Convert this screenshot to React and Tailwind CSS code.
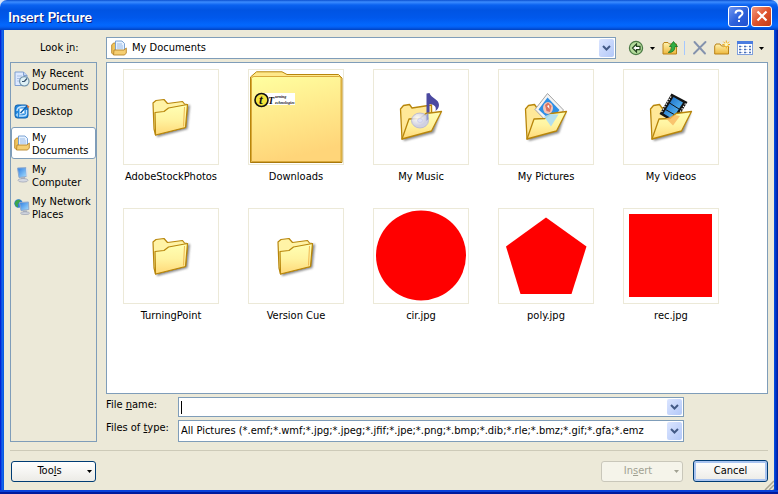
import React from "react";

const GOLD = "#b8860b";

function Gradients() {
  return (
    <svg width="0" height="0" className="absolute" aria-hidden="true">
      <defs>
        <linearGradient id="folder" x1="0" y1="0" x2="0" y2="1">
          <stop offset="0" stopColor="#ffffb4" />
          <stop offset="0.5" stopColor="#fff3a0" />
          <stop offset="1" stopColor="#ffd877" />
        </linearGradient>
        <linearGradient id="bigFolder" x1="0" y1="0" x2="0.25" y2="1">
          <stop offset="0" stopColor="#ffffa0" />
          <stop offset="0.5" stopColor="#ffea8c" />
          <stop offset="1" stopColor="#ffd579" />
        </linearGradient>
        <linearGradient id="smallFolder" x1="0" y1="0" x2="0" y2="1">
          <stop offset="0" stopColor="#fff3b0" />
          <stop offset="1" stopColor="#edb73c" />
        </linearGradient>
        <linearGradient id="blueScreen" x1="0" y1="0" x2="1" y2="1">
          <stop offset="0" stopColor="#2b7be0" />
          <stop offset="1" stopColor="#a9e0ff" />
        </linearGradient>
        <linearGradient id="film" x1="0" y1="0" x2="1" y2="1">
          <stop offset="0" stopColor="#0c5fc0" />
          <stop offset="1" stopColor="#6fd0ff" />
        </linearGradient>
        <radialGradient id="disc" cx="0.35" cy="0.35">
          <stop offset="0" stopColor="#ffffff" />
          <stop offset="1" stopColor="#c8cbee" />
        </radialGradient>
        <filter id="soft" x="-20%" y="-20%" width="150%" height="150%">
          <feGaussianBlur stdDeviation="1" />
        </filter>
      </defs>
    </svg>
  );
}

function Art({ children }) {
  return (
    <svg viewBox="1 1 94 94" className="block size-full" aria-hidden="true">
      {children}
    </svg>
  );
}

function ClosedFolder() {
  return (
    <Art>
      <path d="M33 45 L67 36 L64.500 60 L34 68Z" fill="#555" opacity=".7" filter="url(#soft)" />
      <path d="M30 34 L33 31.500 L41 30.500 L44.500 34.500 L59.500 32.500 L61.500 35 L64.500 35.500 L62.500 58.500 L32.500 66 L31 60Z" fill="#fff3a6" stroke={GOLD} strokeWidth="1.200" strokeLinejoin="round" />
      <path d="M32 43.500 L41 42.500 L45.500 39 L64.500 35.500 L62.500 58.500 L32.500 66Z" fill="url(#folder)" stroke={GOLD} strokeWidth="1.200" strokeLinejoin="round" />
      <path d="M61.500 38 L60.500 57.500" stroke="#f0b850" strokeWidth="1" />
    </Art>
  );
}

function OpenFolder({ children, overlay }) {
  return (
    <Art>
      <path d="M30 69 L68 43 L61 64 L31 72Z" fill="#444" opacity=".6" filter="url(#soft)" />
      <path d="M27.500 40 L30.500 36.500 L36.500 35.500 L39 39 L58.500 36 L59 60 L29 70Z" fill="#ffe898" stroke={GOLD} strokeWidth="1.300" strokeLinejoin="round" />
      {children}
      <path d="M29 70 L36 50 L47 49.500 L53 44.500 L68.500 42.500 L58.500 62Z" fill="url(#folder)" stroke={GOLD} strokeWidth="1.300" strokeLinejoin="round" />
      {overlay}
    </Art>
  );
}

function MusicFolder() {
  return (
    <OpenFolder
      overlay={
        <g>
          <ellipse cx="47" cy="51.500" rx="8.500" ry="7.500" fill="url(#disc)" stroke="#a3a8da" strokeWidth=".8" opacity=".85" />
          <ellipse cx="47" cy="51.500" rx="2.500" ry="2" fill="#dfe1f6" stroke="#b9bde4" strokeWidth=".5" />
          <path d="M53.500 45 L55.500 44 L55.500 50 L53.500 52Z" fill="#9298cf" />
        </g>
      }
    >
      <path d="M53.500 24.500 L56.500 24 C58 29 66 30 66 36 C66 39 64 41 62.500 42 C64 37 60 35 56.500 35 L56.500 48 L53.500 50Z" fill="#4b49a0" />
    </OpenFolder>
  );
}

function PictureFolder() {
  return (
    <OpenFolder overlay={<path d="M46 47.500 L52 45 L60.500 45.500 L53 57.500Z" fill="#a9dcf5" opacity=".9" />}>
      <path d="M49.500 24.500 L65.500 41 L53 57 L37 40.500Z" fill="#f4f4f4" stroke="#a4a4a4" strokeWidth="1" />
      <path d="M49.500 28.500 L61.500 41 L53 52 L40.500 40.500Z" fill="#2e8fe6" />
      <ellipse cx="50" cy="39" rx="5" ry="6" fill="#f4c6b6" />
      <path d="M47 36 L50 33.500 L53.500 37 L52 43 L48.500 42Z" fill="#dc735f" />
      <path d="M49 37 L51 36 L51.500 40Z" fill="#fff" />
    </OpenFolder>
  );
}

function VideoFolder() {
  return (
    <OpenFolder overlay={<path d="M43 49.500 L52 46 L57 47 L50 56.500Z" fill="#f7b35c" opacity=".75" />}>
      <path d="M48.500 24.500 L64.500 33 L51.500 54 L36.500 45Z" fill="#151515" />
      <path d="M50.500 28 L60 33.500 L49.500 50 L40.500 44.500Z" fill="url(#film)" />
      <path d="M46.500 34 L56 40 M42.500 40.500 L52 46" stroke="#111" strokeWidth="1" />
      <path d="M48 27.500 L38 44 M62.500 34.500 L52 51" stroke="#fff" strokeWidth="1.200" strokeDasharray="1.300 1.500" />
    </OpenFolder>
  );
}

function DownloadsFolder() {
  return (
    <Art>
      <path d="M2.500 93.500 V8 L8.500 2.800 H34 L39 5.500 H90.500 L94 9 V93.500Z" fill="#ffe88a" stroke={GOLD} />
      <path d="M3.500 92.500 V9.500 Q3.500 7.500 6 7.500 H91 Q93 7.500 93 9.500 V92.500Z" fill="url(#bigFolder)" stroke="#d9a93a" />
      <path d="M2.500 93.500 H94" stroke="#a8780c" />
      <rect x="16" y="24" width="31" height="12" fill="#fff" />
      <circle cx="13.500" cy="31" r="6.500" fill="#f4e53c" stroke="#111" strokeWidth="1.600" />
      <g fill="#111" fontStyle="italic" fontWeight="700" fontFamily="Liberation Serif, serif">
        <text x="11" y="35" fontSize="13">t</text>
        <text x="20" y="35" fontSize="10">T</text>
        <text x="27" y="29" fontSize="4">urning</text>
        <text x="27" y="35" fontSize="4">echnologies</text>
      </g>
    </Art>
  );
}

function Circle() {
  return (
    <Art>
      <circle cx="48" cy="47.500" r="45" fill="#f00" />
    </Art>
  );
}

function Pentagon() {
  return (
    <Art>
      <polygon points="48,9.500 88.500,38.500 73.500,86 22.500,86 8,38.500" fill="#f00" />
    </Art>
  );
}

function Square() {
  return (
    <Art>
      <rect x="6" y="6" width="83" height="83" fill="#f00" />
    </Art>
  );
}

function Icon({ children }) {
  return (
    <svg viewBox="0 0 16 16" className="block size-4 shrink-0" aria-hidden="true">
      {children}
    </svg>
  );
}

function RecentIcon() {
  return (
    <Icon>
      <path d="M1 1 H9.500 L13 4.500 V14.500 H1Z" fill="#dce9ff" stroke="#7f9fd0" />
      <path d="M9.500 1 V4.500 H13" fill="#c0d4f4" stroke="#7f9fd0" />
      <path d="M3 5 H8 M3 7.500 H6 M3 10 H5" stroke="#a9bfe4" />
      <circle cx="10.300" cy="10.300" r="4.700" fill="#dff1f6" stroke="#6f91a8" strokeWidth="1.200" />
      <path d="M10.300 10.500 L13 7.500 M10.300 10.500 H8" stroke="#35506b" strokeWidth="1.200" />
    </Icon>
  );
}

function DesktopIcon() {
  return (
    <Icon>
      <rect x="1" y="2" width="13" height="13" rx="2.500" fill="#2287dc" stroke="#0c5fae" />
      <path d="M3 8 Q3 4 8 3.500 L12 3.500 M12.500 7 V11 Q12 13 9 13 H5" fill="none" stroke="#bfe2ff" strokeWidth="1.400" />
      <path d="M5.500 5.500 L10.500 5 V10.500 L5.500 11.500Z" fill="#fff" stroke="#7fbdf0" />
      <path d="M6.500 10 L13.500 2.500" stroke="#0c5fae" strokeWidth="1.500" />
      <path d="M12.500 1.500 L15.500 3.500 L14 5.500Z" fill="#e87c3a" />
      <path d="M1.500 12 L4 9.500 V14Z" fill="#9bd1fa" />
    </Icon>
  );
}

function DocumentsIcon() {
  return (
    <Icon>
      <path d="M.7 5 L2.500 3 H5 V14 L2 14.500 L.7 13Z" fill="#f0c45c" stroke="#b8862a" strokeWidth=".9" />
      <path d="M4.500 1 H11 L13.500 3.500 V11 H4.500Z" fill="#e6f1ff" stroke="#6f9bd0" strokeWidth=".9" />
      <path d="M6 4 H11 M6 6 H12 M6 8 H12" stroke="#9cbce6" />
      <path d="M3 10 H13 L15.300 8 V13 L13.500 15 H2.500Z" fill="#f5ce72" stroke="#b8862a" strokeWidth=".9" />
    </Icon>
  );
}

function ComputerIcon() {
  return (
    <Icon>
      <path d="M3.500 1 L12 .7 L12.500 9.500 L5 10.500Z" fill="url(#blueScreen)" stroke="#8fa9cc" />
      <path d="M12 .7 L13.700 2 V10 L12.500 9.800Z" fill="#dfe4ec" />
      <path d="M7 10.500 L11 10 V12.500 H7Z" fill="#a7aebb" />
      <ellipse cx="9" cy="13.300" rx="5" ry="1.800" fill="#d5d9e2" stroke="#9aa1b2" strokeWidth=".7" />
    </Icon>
  );
}

function NetworkIcon() {
  return (
    <Icon>
      <circle cx="4.500" cy="4.500" r="4.200" fill="#2d7cd8" />
      <path d="M1 3 Q3 0 6.500 1 Q6 4 3.500 5 Q5 7 3.500 8.400 Q1 7 .7 4.500Z" fill="#3da548" />
      <path d="M5.500 3.500 L14.500 3 L14.800 10.500 L7 11.500Z" fill="url(#blueScreen)" stroke="#8fa9cc" />
      <path d="M9 11.500 H13 V13.500 H9Z" fill="#a7aebb" />
      <ellipse cx="11" cy="14.200" rx="4.500" ry="1.400" fill="#cfd4de" stroke="#9aa1b2" strokeWidth=".7" />
    </Icon>
  );
}

function BackIcon() {
  return (
    <Icon>
      <circle cx="8" cy="8" r="6.600" fill="#b5dc9c" stroke="#4b7a45" strokeWidth="1.200" />
      <path d="M8.500 4 L4.500 8 L8.500 12 V9.700 H12 V6.300 H8.500Z" fill="#fff" stroke="#24451f" strokeWidth="1.200" />
    </Icon>
  );
}

function UpFolderIcon() {
  return (
    <Icon>
      <path d="M1 4 L2 2.500 H6 L7.500 4 H14.500 V14 H1Z" fill="url(#smallFolder)" stroke="#b98218" />
      <path d="M6.500 12 Q9.500 11 9.500 6.500 H7.500 L11.500 1.500 L15.500 6.500 H13 Q13 12.500 6.500 12.500Z" fill="#2fae42" stroke="#187026" strokeWidth=".8" />
    </Icon>
  );
}

function DeleteIcon() {
  return (
    <Icon>
      <path d="M2.500 2 L13 13.500 M13.500 2 L2 13.500" stroke="#8492ad" strokeWidth="1.900" strokeLinecap="round" />
    </Icon>
  );
}

function NewFolderIcon() {
  return (
    <Icon>
      <path d="M.7 6 L2 4 H6 L7.500 6 H14.500 V14 H.7Z" fill="url(#smallFolder)" stroke="#b98218" />
      <path d="M12.300 .5 V8.500 M8.300 4.500 H16 M9.500 1.700 L15 7.300 M15 1.700 L9.500 7.300" stroke="#f2b01e" strokeWidth="1" />
      <circle cx="12.300" cy="4.500" r="1.700" fill="#fff7b8" />
    </Icon>
  );
}

function ViewsIcon() {
  return (
    <Icon>
      <rect x=".5" y="1.500" width="15" height="13" fill="#fff" stroke="#7f9fdc" />
      <rect x="0" y="1" width="16" height="3" fill="#4a7ce0" />
      <path d="M2 6.500 H4 M7 6.500 H9 M12 6.500 H14 M2 9.500 H4 M7 9.500 H9 M12 9.500 H14 M2 12.500 H4 M7 12.500 H9 M12 12.500 H14" stroke="#4a6fb8" strokeWidth="1.500" />
      <path d="M4 6.500 H5.500 M9 6.500 H10.500 M4 9.500 H5.500 M9 9.500 H10.500 M4 12.500 H5.500 M9 12.500 H10.500" stroke="#a9bde6" strokeWidth="1" />
    </Icon>
  );
}

function Triangle({ className = "text-black" }) {
  return (
    <svg viewBox="0 0 5 3" className={`${className} block h-[3px] w-[5px] shrink-0`} aria-hidden="true">
      <path d="M0 0 H5 L2.500 3Z" fill="currentColor" />
    </svg>
  );
}

function Chevron() {
  return (
    <span className="pointer-events-none flex w-[15px] shrink-0 items-center justify-center self-stretch rounded-xs bg-linear-to-br from-[#dbe5ff] to-[#b3c8f8]">
      <svg viewBox="0 0 9 6" className="h-[6px] w-[9px]" aria-hidden="true">
        <path d="M1 1 L4.500 4.500 L8 1" fill="none" stroke="#435a86" strokeWidth="2" />
      </svg>
    </span>
  );
}

function ToolButton({ label, children }) {
  return (
    <button type="button" aria-label={label} className="flex shrink-0 items-center">
      {children}
    </button>
  );
}

const places = [
  { name: "My Recent Documents", icon: RecentIcon },
  { name: "Desktop", icon: DesktopIcon },
  { name: "My Documents", icon: DocumentsIcon, active: true },
  { name: "My Computer", icon: ComputerIcon },
  { name: "My Network Places", icon: NetworkIcon },
];

const files = [
  { name: "AdobeStockPhotos", art: ClosedFolder },
  { name: "Downloads", art: DownloadsFolder },
  { name: "My Music", art: MusicFolder },
  { name: "My Pictures", art: PictureFolder },
  { name: "My Videos", art: VideoFolder },
  { name: "TurningPoint", art: ClosedFolder },
  { name: "Version Cue", art: ClosedFolder },
  { name: "cir.jpg", art: Circle },
  { name: "poly.jpg", art: Pentagon },
  { name: "rec.jpg", art: Square },
];

function TitleBar() {
  return (
    <header className="flex h-[30px] shrink-0 items-center gap-[2px] rounded-t-[7px] bg-[linear-gradient(180deg,#0a4fd0_0,#3c8cff_2px,#0a62f0_5px,#0054e3_10px,#0058ec_18px,#0268fe_25px,#0460f4_27px,#0042c0_30px)] pt-[2px] pr-[6px] pl-2">
      <h1 className="flex-1 pt-[2px] font-['Lato','Open_Sans',sans-serif] text-[14px] leading-4 font-bold text-white [text-shadow:1px_1px_0_#0a1f80]">
        Insert Picture
      </h1>
      <button type="button" aria-label="Help" className="flex size-[21px] items-center justify-center rounded-[3px] border border-white bg-linear-to-br from-[#6f95f0] via-[#2f62dc] to-[#1f4fd0]">
        <svg viewBox="0 0 12 14" className="h-[14px] w-[12px]" aria-hidden="true">
          <path d="M2.500 4.500 Q2.500 1.500 6 1.500 Q9.500 1.500 9.500 4.300 Q9.500 6 7.500 7 Q6 7.800 6 9.500" fill="none" stroke="#fff" strokeWidth="2" />
          <rect x="5" y="11" width="2" height="2" fill="#fff" />
        </svg>
      </button>
      <button type="button" aria-label="Close" className="flex size-[21px] items-center justify-center rounded-[3px] border border-white bg-linear-to-br from-[#f0987c] via-[#e0532c] to-[#c43c14]">
        <svg viewBox="0 0 12 12" className="size-3" aria-hidden="true">
          <path d="M1.500 1.500 L10.500 10.500 M10.500 1.500 L1.500 10.500" stroke="#fff" strokeWidth="2.200" />
        </svg>
      </button>
    </header>
  );
}

function LookIn() {
  return (
    <div className="flex h-[22px] items-center">
      <label htmlFor="look-in" className="w-24 shrink-0 pl-[30px]">
        Look <u>i</u>n:
      </label>
      <div className="flex h-[22px] min-w-0 flex-1 items-center border border-[#7f9db9] bg-white p-px">
        <span className="pr-[5px] pl-[3px]">
          <DocumentsIcon />
        </span>
        <select id="look-in" className="min-w-0 flex-1 appearance-none bg-white outline-none">
          <option>My Documents</option>
        </select>
        <Chevron />
      </div>
      <div className="flex w-[152px] shrink-0 items-center justify-between pr-1 pl-3">
        <ToolButton label="Back"><BackIcon /></ToolButton>
        <ToolButton label="Back history"><Triangle /></ToolButton>
        <ToolButton label="Up one level"><UpFolderIcon /></ToolButton>
        <span className="h-[14px] w-px bg-[#a5c8ff]" />
        <ToolButton label="Delete"><DeleteIcon /></ToolButton>
        <ToolButton label="Create new folder"><NewFolderIcon /></ToolButton>
        <ToolButton label="Views"><ViewsIcon /></ToolButton>
        <ToolButton label="Views menu"><Triangle /></ToolButton>
      </div>
    </div>
  );
}

function Places() {
  return (
    <nav aria-label="Places" className="w-[87px] shrink-0 border border-[#7f9db9]">
      {places.map(({ name, icon: Glyph, active }) => (
        <button
          key={name}
          type="button"
          className={
            active
              ? "flex h-8 w-full items-center gap-[2px] rounded-[3px] border border-[#7f9db9] bg-white pl-[2px] text-left leading-[13px]"
              : "flex h-8 w-full items-center gap-[2px] border border-transparent pl-[2px] text-left leading-[13px]"
          }
        >
          <Glyph />
          <span className="w-[62px] pt-px">{name}</span>
        </button>
      ))}
    </nav>
  );
}

function FileList() {
  return (
    <ul className="grid flex-1 grid-cols-[repeat(auto-fill,96px)] content-start gap-x-[29px] gap-y-6 border border-[#7f9db9] bg-white px-4 pt-[6px]">
      {files.map(({ name, art: Thumb }) => (
        <li key={name}>
          <button type="button" className="flex w-24 flex-col items-center gap-[5px]">
            <span className="block size-24 border border-[#ece9d8]">
              <Thumb />
            </span>
            <span className="leading-[14px] whitespace-nowrap">{name}</span>
          </button>
        </li>
      ))}
    </ul>
  );
}

function Fields() {
  return (
    <div className="grid grid-cols-[72px_minmax(0,506px)] gap-y-[3px] pt-[3px]">
      <label htmlFor="file-name" className="leading-4">
        File <u>n</u>ame:
      </label>
      <div className="flex h-5 items-center border border-[#7f9db9] bg-white p-px">
        <span className="ml-px h-[13px] w-px bg-black" />
        <input id="file-name" type="text" className="min-w-0 flex-1 bg-white caret-transparent outline-none" />
        <Chevron />
      </div>
      <label htmlFor="file-type" className="leading-4">
        Files of <u>t</u>ype:
      </label>
      <div className="flex h-[22px] items-center border border-[#7f9db9] bg-white p-px">
        <select id="file-type" className="min-w-0 flex-1 appearance-none overflow-hidden bg-white pl-px outline-none">
          <option>All Pictures (*.emf;*.wmf;*.jpg;*.jpeg;*.jfif;*.jpe;*.png;*.bmp;*.dib;*.rle;*.bmz;*.gif;*.gfa;*.emz</option>
        </select>
        <Chevron />
      </div>
    </div>
  );
}

function Actions() {
  return (
    <footer className="mt-2 flex items-end border-t border-[#cdcab8] pt-[9px]">
      <button type="button" className="ml-px flex h-[21px] w-[85px] items-center rounded-[3px] border border-[#003c74] bg-linear-to-b from-white to-[#ecebe6] pr-[3px]">
        <span className="flex-1 text-center">
          Too<u>l</u>s
        </span>
        <Triangle />
      </button>
      <span className="flex-1" />
      <button type="button" disabled className="flex h-[21px] w-[82px] items-center rounded-[3px] border border-[#c9c7ba] bg-[#f5f4ea] pr-[3px] text-[#a1a192]">
        <span className="flex-1 text-center">
          In<u>s</u>ert
        </span>
        <Triangle className="text-[#a1a192]" />
      </button>
      <button type="button" className="ml-[10px] h-[22px] w-[75px] rounded-[3px] border border-[#003c74] bg-linear-to-b from-white to-[#ecebe6] shadow-[inset_0_0_0_2px_#a9c4f0]">
        Cancel
      </button>
    </footer>
  );
}

export default function App() {
  return (
    <div className="flex min-h-screen flex-col bg-[#d8e4f8] font-['DejaVu_Sans_Condensed','DejaVu_Sans',sans-serif] text-[11px] text-black">
      <Gradients />
      <TitleBar />
      <div className="flex flex-1 flex-col bg-[linear-gradient(90deg,#0019cf_0,#0831d9_1px,#166aee_2px,#0855dd_4px,#0855dd_calc(100%-4px),#0040d8_calc(100%-3px),#001a9c_100%)] px-1 pb-1 shadow-[inset_0_-2px_0_#001a9c,inset_0_-4px_0_#0841d9]">
        <main className="relative flex flex-1 flex-col bg-[#ece9d8] px-[6px] pt-[7px] pb-2">
          <LookIn />
          <div className="mt-[3px] flex flex-1 gap-[9px]">
            <Places />
            <div className="flex min-w-0 flex-1 flex-col">
              <FileList />
              <Fields />
            </div>
          </div>
          <Actions />
          <svg viewBox="0 0 10 10" className="absolute right-0 bottom-0 size-[10px]" aria-hidden="true">
            <path d="M1 10 L10 1 M5 10 L10 5 M9 10 L10 9" stroke="#a8a590" strokeWidth="1.500" />
          </svg>
        </main>
      </div>
    </div>
  );
}
